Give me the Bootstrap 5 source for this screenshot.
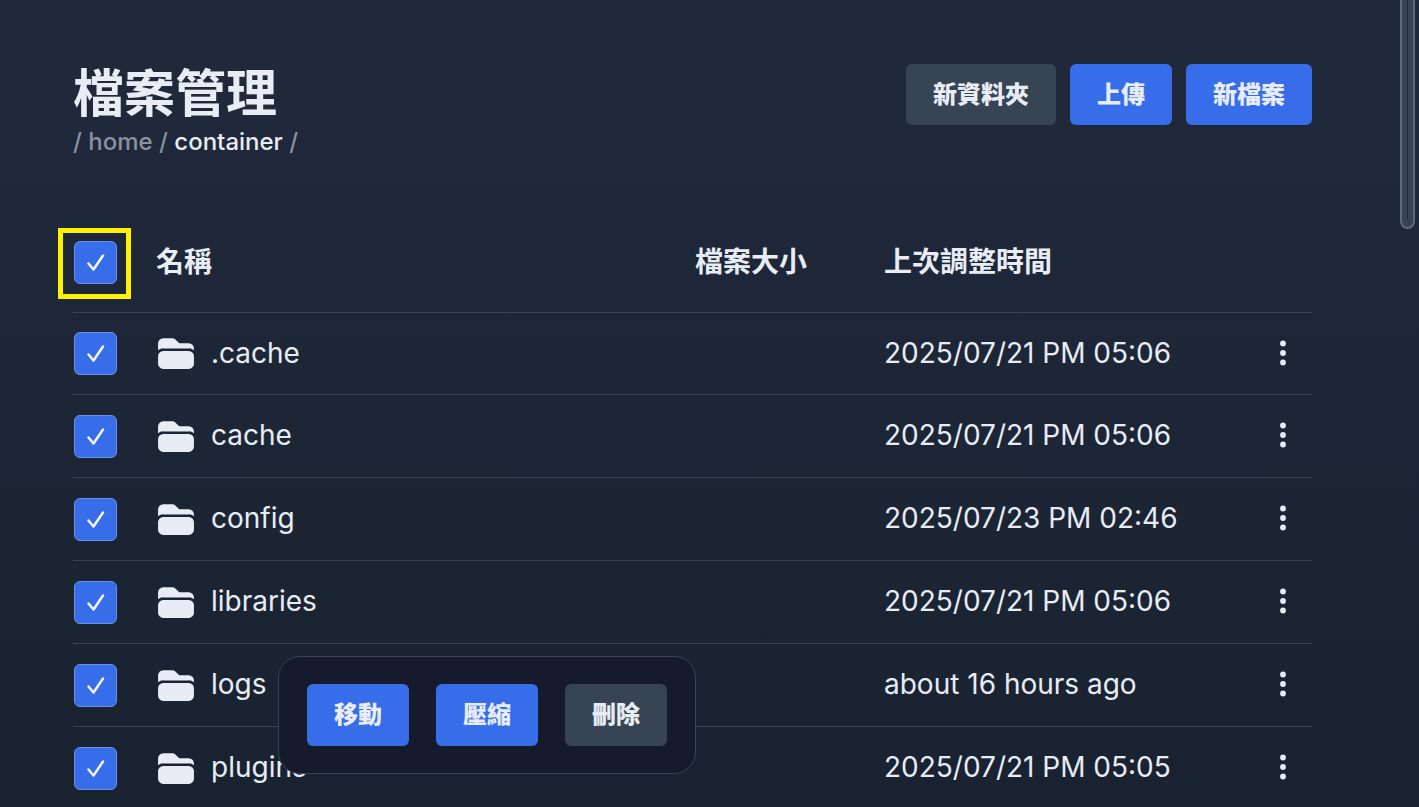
<!DOCTYPE html>
<html lang="zh-Hant">
<head>
<meta charset="utf-8">
<meta name="viewport" content="width=device-width, initial-scale=1">
<title>檔案管理</title>
<link href="https://cdn.jsdelivr.net/npm/bootstrap@5.3.0/dist/css/bootstrap.min.css" rel="stylesheet">
<style>
  :root { --ink: #e7ecf5; --line: #364454; --blue: #386de9; --slate: #374454; }
  body {
    min-height: 100vh;
    overflow: hidden;
    height: 100vh;
    color: var(--ink);
    background: linear-gradient(#202a3a, #192231);
    font-family: Inter, "Noto Sans CJK TC", sans-serif;
  }
  .page { padding: 64px 107px 0 73px; }
  .page-title { font-size: 51px; line-height: 60px; font-weight: 700; }
  .crumbs { font-size: 24px; line-height: 32px; font-weight: 500; color: #8992a0; margin-top: 2px; }
  .crumbs a { color: inherit; text-decoration: none; }
  .crumbs .current { color: var(--ink); }
  .btn-file {
    --bs-btn-color: var(--ink);
    --bs-btn-hover-color: #fff;
    --bs-btn-border-width: 0;
    --bs-btn-padding-x: 27px;
    --bs-btn-padding-y: 0;
    --bs-btn-font-size: 24px;
    --bs-btn-font-weight: 900;
    --bs-btn-border-radius: 6px;
    height: 61px;
    line-height: 60px;
  }
  .btn-main { --bs-btn-bg: var(--blue); --bs-btn-hover-bg: #2f5fd0; }
  .btn-muted { --bs-btn-bg: var(--slate); --bs-btn-hover-bg: #425064; }
  .actions { gap: 14px; }
  .files {
    width: 100%;
    margin-top: 52px;
    table-layout: fixed;
    font-size: 28px;
    line-height: 36px;
  }
  .files th, .files td { height: 83px; padding: 0; vertical-align: middle; border-bottom: 1px solid var(--line); }
  .files thead th { height: 102px; padding-top: 3px; font-weight: 700; }
  .files tbody tr:first-child td { height: 82px; }
  .files tbody td:first-child { padding-top: 1px; }
  .files td + td { padding-bottom: 1px; }
  .col-tick { width: 83px; }
  .col-size { width: 189px; }
  .col-date { width: 370px; }
  .col-more { width: 58px; }
  .tick-wrap { position: relative; width: 43px; height: 43px; margin-left: 1px; }
  .tick-wrap .form-check-input {
    display: block;
    width: 43px;
    height: 43px;
    margin: 0;
    border-radius: 6px;
    border-color: #6a90ea;
  }
  .tick-wrap .form-check-input:checked {
    background-color: var(--blue);
    background-size: 100%;
    background-image: url("data:image/svg+xml,%3Csvg xmlns='http://www.w3.org/2000/svg' viewBox='0 0 41 41'%3E%3Cpath d='M13.500 21.500l5 6L28 13.500' fill='none' stroke='%23f2f5fb' stroke-width='2.500' stroke-linecap='round' stroke-linejoin='round'/%3E%3C/svg%3E");
  }
  .tick-marked::after {
    content: "";
    position: absolute;
    inset: -13px -14px -15px -16px;
    border: 5px solid #fff200;
    pointer-events: none;
  }
  .folder { width: 42px; height: 41px; flex: none; margin-top: 2px; }
  .file-name { gap: 14px; margin-left: -1px; }
  .btn-more { display: block; padding: 0; border: 0; color: var(--ink); line-height: 0; }
  .btn-more svg { display: block; width: 58px; height: 36px; }
  .bulk {
    left: 278px;
    bottom: 33px;
    gap: 27px;
    padding: 27px 28px;
    border: 1px solid var(--line);
    border-radius: 22px;
    background: #151b2c;
  }
  .bulk .btn-file { height: 62px; }
  .scroll-thumb {
    position: fixed;
    top: -8px;
    right: 4px;
    width: 15px;
    height: 237px;
    border: 2px solid #5f6b7a;
    border-radius: 8px;
    background: linear-gradient(#202a3b, #202a3b) center top / 1px 225px no-repeat #374454;
  }
</style>
</head>
<body>
<svg class="d-none" xmlns="http://www.w3.org/2000/svg">
  <symbol id="folder" viewBox="0 0 24 24"><path fill="currentColor" d="M19.500 21a3 3 0 003-3v-4.500a3 3 0 00-3-3h-15a3 3 0 00-3 3V18a3 3 0 003 3h15zM1.500 10.146V6a3 3 0 013-3h5.379a2.250 2.250 0 011.590.659l2.122 2.121c.14.141.331.22.53.22H19.500a3 3 0 013 3v1.146A4.483 4.483 0 0019.500 9h-15a4.483 4.483 0 00-3 1.146z"/></symbol>
  <symbol id="dots" viewBox="0 0 58 36"><g fill="currentColor"><circle cx="29" cy="8.500" r="2.900"/><circle cx="29" cy="18" r="2.900"/><circle cx="29" cy="27.500" r="2.900"/></g></symbol>
</svg>

<main class="page">
  <header class="d-flex justify-content-between align-items-start">
    <div>
      <h1 class="page-title mb-0">檔案管理</h1>
      <nav class="crumbs" aria-label="路徑">/ <a href="#">home</a> / <a href="#" class="current">container</a> /</nav>
    </div>
    <div class="actions d-flex">
      <button type="button" class="btn btn-file btn-muted">新資料夾</button>
      <button type="button" class="btn btn-file btn-main">上傳</button>
      <button type="button" class="btn btn-file btn-main">新檔案</button>
    </div>
  </header>

  <table class="files">
    <colgroup><col class="col-tick"><col><col class="col-size"><col class="col-date"><col class="col-more"></colgroup>
    <thead>
      <tr>
        <th><div class="tick-wrap tick-marked"><input class="form-check-input" type="checkbox" checked aria-label="全選"></div></th>
        <th>名稱</th><th>檔案大小</th><th>上次調整時間</th><th></th>
      </tr>
    </thead>
    <tbody>
      <tr>
        <td><div class="tick-wrap"><input class="form-check-input" type="checkbox" checked id="f1"></div></td>
        <td><label class="file-name d-flex align-items-center" for="f1"><svg class="folder"><use href="#folder"/></svg>.cache</label></td>
        <td></td><td>2025/07/21 PM 05:06</td>
        <td><button type="button" class="btn btn-more" aria-label="更多"><svg><use href="#dots"/></svg></button></td>
      </tr>
      <tr>
        <td><div class="tick-wrap"><input class="form-check-input" type="checkbox" checked id="f2"></div></td>
        <td><label class="file-name d-flex align-items-center" for="f2"><svg class="folder"><use href="#folder"/></svg>cache</label></td>
        <td></td><td>2025/07/21 PM 05:06</td>
        <td><button type="button" class="btn btn-more" aria-label="更多"><svg><use href="#dots"/></svg></button></td>
      </tr>
      <tr>
        <td><div class="tick-wrap"><input class="form-check-input" type="checkbox" checked id="f3"></div></td>
        <td><label class="file-name d-flex align-items-center" for="f3"><svg class="folder"><use href="#folder"/></svg>config</label></td>
        <td></td><td>2025/07/23 PM 02:46</td>
        <td><button type="button" class="btn btn-more" aria-label="更多"><svg><use href="#dots"/></svg></button></td>
      </tr>
      <tr>
        <td><div class="tick-wrap"><input class="form-check-input" type="checkbox" checked id="f4"></div></td>
        <td><label class="file-name d-flex align-items-center" for="f4"><svg class="folder"><use href="#folder"/></svg>libraries</label></td>
        <td></td><td>2025/07/21 PM 05:06</td>
        <td><button type="button" class="btn btn-more" aria-label="更多"><svg><use href="#dots"/></svg></button></td>
      </tr>
      <tr>
        <td><div class="tick-wrap"><input class="form-check-input" type="checkbox" checked id="f5"></div></td>
        <td><label class="file-name d-flex align-items-center" for="f5"><svg class="folder"><use href="#folder"/></svg>logs</label></td>
        <td></td><td>about 16 hours ago</td>
        <td><button type="button" class="btn btn-more" aria-label="更多"><svg><use href="#dots"/></svg></button></td>
      </tr>
      <tr>
        <td><div class="tick-wrap"><input class="form-check-input" type="checkbox" checked id="f6"></div></td>
        <td><label class="file-name d-flex align-items-center" for="f6"><svg class="folder"><use href="#folder"/></svg>plugins</label></td>
        <td></td><td>2025/07/21 PM 05:05</td>
        <td><button type="button" class="btn btn-more" aria-label="更多"><svg><use href="#dots"/></svg></button></td>
      </tr>
    </tbody>
  </table>
</main>

<div class="bulk position-fixed d-flex">
  <button type="button" class="btn btn-file btn-main">移動</button>
  <button type="button" class="btn btn-file btn-main">壓縮</button>
  <button type="button" class="btn btn-file btn-muted">刪除</button>
</div>
<div class="scroll-thumb"></div>
<script src="https://cdn.jsdelivr.net/npm/bootstrap@5.3.0/dist/js/bootstrap.bundle.min.js"></script>
</body>
</html>
